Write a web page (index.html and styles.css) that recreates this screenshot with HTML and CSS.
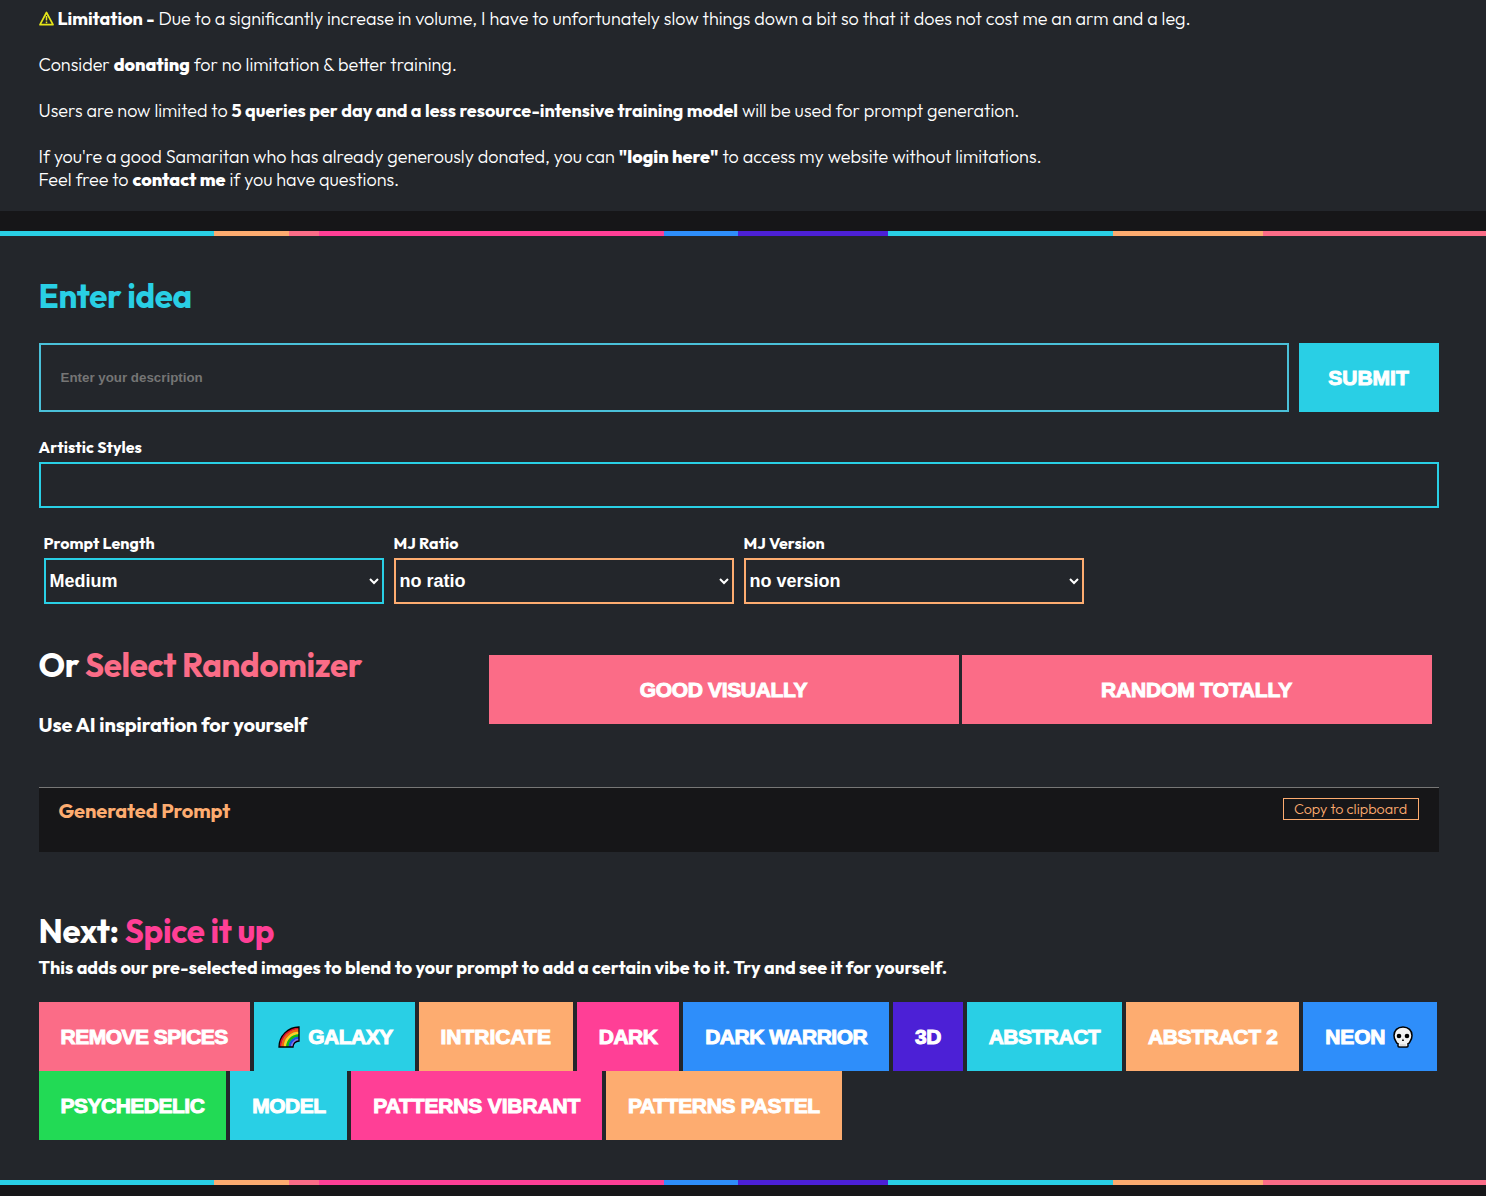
FILE: index.html
```html
<!DOCTYPE html>
<html lang="en">
<head>
    <meta charset="UTF-8">
    <title>Prompt Generator</title>
    <link rel="stylesheet" href="styles.css">
</head>
<body>
    <div class="notice">
        <svg class="warn" viewBox="0 0 15 15"><path d="M7.500 1.500 14 13.700H1Z" fill="none" stroke="#e6e619" stroke-width="1.700" stroke-linejoin="round"/><path d="M7.500 5v4.600M7.500 10.400v1.800" stroke="#e6e619" stroke-width="1.500"/></svg>
        <b>Limitation -</b> Due to a significantly increase in volume, I have to unfortunately slow things down a bit so that it does not cost me an arm and a leg.<br><br>
        Consider <a>donating</a> for no limitation &amp; better training.<br><br>
        Users are now limited to <b>5 queries per day and a less resource-intensive training model</b> will be used for prompt generation.<br><br>
        If you're a good Samaritan who has already generously donated, you can <a>"login here"</a> to access my website without limitations.<br>
        Feel free to <a>contact me</a> if you have questions.
    </div>

    <div class="stripe"></div>
    <main>
        <h2 class="cyan">Enter idea</h2>
        <form class="idea">
            <input type="text" placeholder="Enter your description">
            <button type="button" class="btn bg-cyan ls-none">SUBMIT</button>
        </form>

        <label>Artistic Styles</label>
        <div class="styles-field"></div>

        <div class="options">
            <div class="option">
                <label>Prompt Length</label>
                <select class="border-cyan"><option>Medium</option></select>
            </div>
            <div class="option">
                <label>MJ Ratio</label>
                <select><option>no ratio</option></select>
            </div>
            <div class="option">
                <label>MJ Version</label>
                <select><option>no version</option></select>
            </div>
        </div>

        <div class="randomizer">
            <div class="randomizer-text">
                <h2>Or <span class="coral">Select Randomizer</span></h2>
                <h3>Use AI inspiration for yourself</h3>
            </div>
            <button class="btn bg-coral ls-mid">GOOD VISUALLY</button>
            <button class="btn bg-coral ls-wide">RANDOM TOTALLY</button>
        </div>

        <div class="result">
            <h3>Generated Prompt</h3>
            <button class="copy">Copy to clipboard</button>
        </div>

        <h2>Next: <span class="pink">Spice it up</span></h2>
        <p class="desc">This adds our pre-selected images to blend to your prompt to add a certain vibe to it. Try and see it for yourself.</p>
        <div class="spices">
            <button class="btn bg-coral">REMOVE SPICES</button>
            <button class="btn bg-cyan"><svg class="emoji rainbow" viewBox="0 0 22 22"><g fill="none" stroke-width="2.500"><path d="M2.200 21A18.800 18.800 0 0 1 21 2.200" stroke="#e0102a"/><path d="M4.600 21A16.400 16.400 0 0 1 21 4.600" stroke="#f7630c"/><path d="M7 21A14 14 0 0 1 21 7" stroke="#ffd21f"/><path d="M9.400 21A11.600 11.600 0 0 1 21 9.400" stroke="#16b80c"/><path d="M11.800 21A9.200 9.200 0 0 1 21 11.800" stroke="#1155e0"/><path d="M14 21A7 7 0 0 1 21 14" stroke="#886ce4"/></g><path d="M1 21A20 20 0 0 1 21 1V15A6 6 0 0 0 15 21Z" fill="none" stroke="#000" stroke-width="1.300"/></svg>GALAXY</button>
            <button class="btn bg-orange ls-none">INTRICATE</button>
            <button class="btn bg-pink">DARK</button>
            <button class="btn bg-blue">DARK WARRIOR</button>
            <button class="btn bg-purple">3D</button>
            <button class="btn bg-cyan">ABSTRACT</button>
            <button class="btn bg-orange ls-mid">ABSTRACT 2</button>
            <button class="btn bg-blue ls-wide">NEON<svg class="emoji skull" viewBox="0 0 20 22"><path d="M10 1C4.500 1 1 4.500 1 9.500c0 3 .8 4.200 1.700 5.500.5 1 .8 2.500 2.300 2.700V20q0 1 1 1h8q1 0 1-1v-2.300c1.500-.2 1.800-1.700 2.300-2.700.9-1.300 1.700-2.500 1.700-5.500C19 4.500 15.500 1 10 1Z" fill="#f2f2f2" stroke="#000" stroke-width="1.500"/><circle cx="6" cy="10" r="2.300"/><circle cx="14" cy="10" r="2.300"/><path d="M10 12.500 8.900 15h2.200Z"/><path d="M8 18v2.500M10 18v2.500M12 18v2.500" stroke="#bbb" stroke-width=".7"/></svg></button>
            <button class="btn bg-green">PSYCHEDELIC</button>
            <button class="btn bg-cyan">MODEL</button>
            <button class="btn bg-pink ls-wide">PATTERNS VIBRANT</button>
            <button class="btn bg-orange ls-mid">PATTERNS PASTEL</button>
        </div>
    </main>
    <div class="stripe"></div>
</body>
</html>
```
FILE: styles.css
```css
* {
    box-sizing: border-box;
}
body {
    margin: 0;
    height: 1196px;
    overflow: hidden;
    background: #161618;
    color: #fff;
    font-family: Outfit, Lato, sans-serif;
}
.notice {
    height: 211px;
    padding: 7px 38.5px 0;
    background: #23262b;
    font-size: 18px;
    font-weight: 300;
    line-height: 23px;
    margin-bottom: 20px;
    white-space: nowrap;
}
.notice b {
    font-weight: 700;
}
.notice a {
    font-weight: 800;
}
.warn {
    width: 15px;
    height: 15px;
    vertical-align: -1px;
}
.stripe {
    height: 5px;
    background: linear-gradient(to right, #29cfe5 214px, #fdac70 214px 289px, #fb6c87 289px 319px, #ff3f96 319px 664px, #2e8efa 664px 738px, #4c20d6 738px 888px, #29cfe5 888px 1113px, #fdac70 1113px 1263px, #fb6c87 1263px);
}
main {
    height: 944px;
    padding: 39px 47.5px 0 38.5px;
    background: #23262b;
}
h2, h3, p {
    margin: 0;
}
h2 {
    font-size: 33px;
    line-height: 43px;
    font-weight: 700;
    letter-spacing: -0.35px;
}
h3 {
    font-size: 20px;
    line-height: 25px;
    font-weight: 700;
    letter-spacing: -0.1px;
}
.cyan { color: #29cfe5; }
.coral { color: #fb6c87; }
.pink { color: #ff3f96; }
.bg-cyan { background: #29cfe5; }
.bg-coral { background: #fb6c87; }
.bg-orange { background: #fdac70; }
.bg-pink { background: #ff3f96; }
.bg-blue { background: #2e8efa; }
.bg-purple { background: #4c20d6; }
.bg-green { background: #22da55; }

.btn {
    height: 69px;
    padding: 0 22px;
    border: none;
    color: #fff;
    font-family: "Liberation Sans", Arial, sans-serif;
    font-size: 21px;
    font-weight: 900;
    letter-spacing: -0.5px;
    -webkit-text-stroke: 1px #fff;
    white-space: nowrap;
}
.ls-none { letter-spacing: 0; }
.ls-wide { letter-spacing: -0.15px; }
.ls-mid { letter-spacing: -0.35px; }

.idea {
    display: flex;
    gap: 10px;
    margin: 25px 0 25px;
}
.idea input {
    flex: 1;
    height: 69px;
    padding: 0 20px;
    border: 2px solid #4ac0d9;
    background: transparent;
    color: #fff;
    font: bold 13.333px "Liberation Sans", Arial, sans-serif;
}
.idea input::placeholder {
    color: #757575;
}
.idea .btn {
    width: 140px;
}
label {
    display: block;
    font-size: 16px;
    line-height: 20px;
    font-weight: 700;
    letter-spacing: 0.07px;
    margin-bottom: 5px;
}
.styles-field {
    height: 46px;
    border: 2px solid #29cfe5;
}
.options {
    display: flex;
    gap: 10px;
    margin: 25px 5px 40px;
}
.option {
    width: 340px;
}
select {
    display: block;
    width: 100%;
    height: 46px;
    padding: 0;
    border: 2px solid #fdac70;
    border-radius: 0;
    background: transparent;
    color: #fff;
    font: bold 18px "Liberation Sans", Arial, sans-serif;
}
.border-cyan {
    border-color: #29cfe5;
}
.randomizer {
    display: flex;
    gap: 3px;
}
.randomizer-text {
    width: 447px;
}
.randomizer h3 {
    margin-top: 25px;
}
.randomizer .btn {
    width: 470px;
    margin-top: 11px;
}
.result {
    display: flex;
    justify-content: space-between;
    align-items: flex-start;
    height: 65px;
    margin: 50px 0 58px;
    padding: 10px 20px;
    border-top: 1px solid #777;
    background: #161618;
    color: #fdac70;
}
.copy {
    width: 136px;
    height: 22px;
    padding: 0 0 1px;
    border: 1px solid #fdac70;
    background: transparent;
    color: #fdac70;
    font-family: Outfit, Lato, sans-serif;
    font-size: 14.4px;
    font-weight: 300;
}
.desc {
    margin: 3px 0 23px;
    font-size: 18px;
    line-height: 23px;
    font-weight: 700;
}
.spices {
    display: flex;
    flex-wrap: wrap;
    column-gap: 3.8px;
    margin-right: -10px;
}
.emoji {
    height: 22px;
    vertical-align: -4px;
}
.rainbow {
    width: 22px;
    margin: 0 8.5px 0 2px;
}
.skull {
    width: 20px;
    margin: 0 2px 0 8px;
}
```
